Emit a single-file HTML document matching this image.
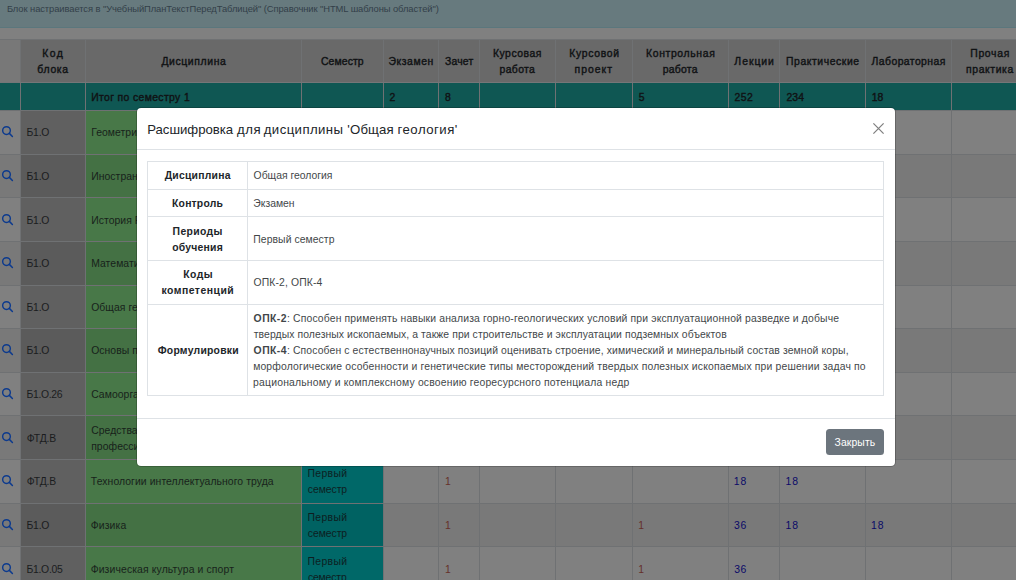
<!DOCTYPE html>
<html lang="ru"><head><meta charset="utf-8"><title>Учебный план</title>
<style>
html,body{margin:0;padding:0}
body{width:1016px;height:580px;overflow:hidden;position:relative;background:#808080;font-family:"Liberation Sans", sans-serif;}
.r{position:absolute}
.t{position:absolute;white-space:nowrap;line-height:16px;height:16px}
.t b{font-weight:bold}
svg{position:absolute;overflow:visible}
</style></head><body>
<div class="alert" role="alert">
<div class="r" style="left:0px;top:0px;width:1016px;height:27px;background:#677a7e;"></div>
<div class="r" style="left:0px;top:27px;width:1016px;height:1px;background:#5b777d;"></div>
<div class="t" style="left:6.91px;top:1px;font-size:9.4px;color:#333f49;letter-spacing:-0.082px;">Блок настраивается в "УчебныйПланТекстПередТаблицей" (Справочник "HTML шаблоны областей")</div>
</div>
<div class="plan" role="table" aria-label="Учебный план">
<div class="r" style="left:0px;top:39px;width:1016px;height:541px;background:#6f7173;"></div>
<div class="r" style="left:0px;top:40px;width:20px;height:42px;background:#787878;"></div>
<div class="r" style="left:21px;top:40px;width:64px;height:42px;background:#696969;"></div>
<div class="r" style="left:86px;top:40px;width:215px;height:42px;background:#696969;"></div>
<div class="r" style="left:302px;top:40px;width:81px;height:42px;background:#696969;"></div>
<div class="r" style="left:384px;top:40px;width:54px;height:42px;background:#696969;"></div>
<div class="r" style="left:439px;top:40px;width:40px;height:42px;background:#696969;"></div>
<div class="r" style="left:480px;top:40px;width:75px;height:42px;background:#696969;"></div>
<div class="r" style="left:556px;top:40px;width:76px;height:42px;background:#696969;"></div>
<div class="r" style="left:633px;top:40px;width:95px;height:42px;background:#696969;"></div>
<div class="r" style="left:729px;top:40px;width:50px;height:42px;background:#696969;"></div>
<div class="r" style="left:780px;top:40px;width:85px;height:42px;background:#696969;"></div>
<div class="r" style="left:866px;top:40px;width:85px;height:42px;background:#696969;"></div>
<div class="r" style="left:952px;top:40px;width:76px;height:42px;background:#696969;"></div>
<div class="r" style="left:0px;top:82px;width:1016px;height:1px;background:#757678;"></div>
<div class="r" style="left:0px;top:83px;width:20px;height:27px;background:#0f5753;"></div>
<div class="r" style="left:21px;top:83px;width:64px;height:27px;background:#0f5753;"></div>
<div class="r" style="left:86px;top:83px;width:215px;height:27px;background:#0f5753;"></div>
<div class="r" style="left:302px;top:83px;width:81px;height:27px;background:#0f5753;"></div>
<div class="r" style="left:384px;top:83px;width:54px;height:27px;background:#0f5753;"></div>
<div class="r" style="left:439px;top:83px;width:40px;height:27px;background:#0f5753;"></div>
<div class="r" style="left:480px;top:83px;width:75px;height:27px;background:#0f5753;"></div>
<div class="r" style="left:556px;top:83px;width:76px;height:27px;background:#0f5753;"></div>
<div class="r" style="left:633px;top:83px;width:95px;height:27px;background:#0f5753;"></div>
<div class="r" style="left:729px;top:83px;width:50px;height:27px;background:#0f5753;"></div>
<div class="r" style="left:780px;top:83px;width:85px;height:27px;background:#0f5753;"></div>
<div class="r" style="left:866px;top:83px;width:85px;height:27px;background:#0f5753;"></div>
<div class="r" style="left:952px;top:83px;width:76px;height:27px;background:#0f5753;"></div>
<div class="r" style="left:0px;top:111px;width:20px;height:43px;background:#808080;"></div>
<div class="r" style="left:21px;top:111px;width:64px;height:43px;background:#606060;"></div>
<div class="r" style="left:86px;top:111px;width:215px;height:43px;background:#487848;"></div>
<div class="r" style="left:302px;top:111px;width:81px;height:43px;background:#006868;"></div>
<div class="r" style="left:384px;top:111px;width:54px;height:43px;background:#808080;"></div>
<div class="r" style="left:439px;top:111px;width:40px;height:43px;background:#808080;"></div>
<div class="r" style="left:480px;top:111px;width:75px;height:43px;background:#808080;"></div>
<div class="r" style="left:556px;top:111px;width:76px;height:43px;background:#808080;"></div>
<div class="r" style="left:633px;top:111px;width:95px;height:43px;background:#808080;"></div>
<div class="r" style="left:729px;top:111px;width:50px;height:43px;background:#808080;"></div>
<div class="r" style="left:780px;top:111px;width:85px;height:43px;background:#808080;"></div>
<div class="r" style="left:866px;top:111px;width:85px;height:43px;background:#808080;"></div>
<div class="r" style="left:952px;top:111px;width:76px;height:43px;background:#808080;"></div>
<svg style="left:1px;top:125px" width="13" height="13" viewBox="0 0 13 13"><circle cx="5.5" cy="5.55" r="3.85" fill="none" stroke="#0c3a8e" stroke-width="1.45"/><path d="M8.35 8.4 L11.4 11.45" stroke="#0c3a8e" stroke-width="1.5" stroke-linecap="round"/></svg>
<div class="r" style="left:0px;top:155px;width:20px;height:42px;background:#797979;"></div>
<div class="r" style="left:21px;top:155px;width:64px;height:42px;background:#5b5b5b;"></div>
<div class="r" style="left:86px;top:155px;width:215px;height:42px;background:#447144;"></div>
<div class="r" style="left:302px;top:155px;width:81px;height:42px;background:#006262;"></div>
<div class="r" style="left:384px;top:155px;width:54px;height:42px;background:#797979;"></div>
<div class="r" style="left:439px;top:155px;width:40px;height:42px;background:#797979;"></div>
<div class="r" style="left:480px;top:155px;width:75px;height:42px;background:#797979;"></div>
<div class="r" style="left:556px;top:155px;width:76px;height:42px;background:#797979;"></div>
<div class="r" style="left:633px;top:155px;width:95px;height:42px;background:#797979;"></div>
<div class="r" style="left:729px;top:155px;width:50px;height:42px;background:#797979;"></div>
<div class="r" style="left:780px;top:155px;width:85px;height:42px;background:#797979;"></div>
<div class="r" style="left:866px;top:155px;width:85px;height:42px;background:#797979;"></div>
<div class="r" style="left:952px;top:155px;width:76px;height:42px;background:#797979;"></div>
<svg style="left:1px;top:169px" width="13" height="13" viewBox="0 0 13 13"><circle cx="5.5" cy="5.55" r="3.85" fill="none" stroke="#0c3a8e" stroke-width="1.45"/><path d="M8.35 8.4 L11.4 11.45" stroke="#0c3a8e" stroke-width="1.5" stroke-linecap="round"/></svg>
<div class="r" style="left:0px;top:198px;width:20px;height:43px;background:#808080;"></div>
<div class="r" style="left:21px;top:198px;width:64px;height:43px;background:#606060;"></div>
<div class="r" style="left:86px;top:198px;width:215px;height:43px;background:#487848;"></div>
<div class="r" style="left:302px;top:198px;width:81px;height:43px;background:#006868;"></div>
<div class="r" style="left:384px;top:198px;width:54px;height:43px;background:#808080;"></div>
<div class="r" style="left:439px;top:198px;width:40px;height:43px;background:#808080;"></div>
<div class="r" style="left:480px;top:198px;width:75px;height:43px;background:#808080;"></div>
<div class="r" style="left:556px;top:198px;width:76px;height:43px;background:#808080;"></div>
<div class="r" style="left:633px;top:198px;width:95px;height:43px;background:#808080;"></div>
<div class="r" style="left:729px;top:198px;width:50px;height:43px;background:#808080;"></div>
<div class="r" style="left:780px;top:198px;width:85px;height:43px;background:#808080;"></div>
<div class="r" style="left:866px;top:198px;width:85px;height:43px;background:#808080;"></div>
<div class="r" style="left:952px;top:198px;width:76px;height:43px;background:#808080;"></div>
<svg style="left:1px;top:213px" width="13" height="13" viewBox="0 0 13 13"><circle cx="5.5" cy="5.55" r="3.85" fill="none" stroke="#0c3a8e" stroke-width="1.45"/><path d="M8.35 8.4 L11.4 11.45" stroke="#0c3a8e" stroke-width="1.5" stroke-linecap="round"/></svg>
<div class="r" style="left:0px;top:242px;width:20px;height:43px;background:#797979;"></div>
<div class="r" style="left:21px;top:242px;width:64px;height:43px;background:#5b5b5b;"></div>
<div class="r" style="left:86px;top:242px;width:215px;height:43px;background:#447144;"></div>
<div class="r" style="left:302px;top:242px;width:81px;height:43px;background:#006262;"></div>
<div class="r" style="left:384px;top:242px;width:54px;height:43px;background:#797979;"></div>
<div class="r" style="left:439px;top:242px;width:40px;height:43px;background:#797979;"></div>
<div class="r" style="left:480px;top:242px;width:75px;height:43px;background:#797979;"></div>
<div class="r" style="left:556px;top:242px;width:76px;height:43px;background:#797979;"></div>
<div class="r" style="left:633px;top:242px;width:95px;height:43px;background:#797979;"></div>
<div class="r" style="left:729px;top:242px;width:50px;height:43px;background:#797979;"></div>
<div class="r" style="left:780px;top:242px;width:85px;height:43px;background:#797979;"></div>
<div class="r" style="left:866px;top:242px;width:85px;height:43px;background:#797979;"></div>
<div class="r" style="left:952px;top:242px;width:76px;height:43px;background:#797979;"></div>
<svg style="left:1px;top:256px" width="13" height="13" viewBox="0 0 13 13"><circle cx="5.5" cy="5.55" r="3.85" fill="none" stroke="#0c3a8e" stroke-width="1.45"/><path d="M8.35 8.4 L11.4 11.45" stroke="#0c3a8e" stroke-width="1.5" stroke-linecap="round"/></svg>
<div class="r" style="left:0px;top:286px;width:20px;height:42px;background:#808080;"></div>
<div class="r" style="left:21px;top:286px;width:64px;height:42px;background:#606060;"></div>
<div class="r" style="left:86px;top:286px;width:215px;height:42px;background:#487848;"></div>
<div class="r" style="left:302px;top:286px;width:81px;height:42px;background:#006868;"></div>
<div class="r" style="left:384px;top:286px;width:54px;height:42px;background:#808080;"></div>
<div class="r" style="left:439px;top:286px;width:40px;height:42px;background:#808080;"></div>
<div class="r" style="left:480px;top:286px;width:75px;height:42px;background:#808080;"></div>
<div class="r" style="left:556px;top:286px;width:76px;height:42px;background:#808080;"></div>
<div class="r" style="left:633px;top:286px;width:95px;height:42px;background:#808080;"></div>
<div class="r" style="left:729px;top:286px;width:50px;height:42px;background:#808080;"></div>
<div class="r" style="left:780px;top:286px;width:85px;height:42px;background:#808080;"></div>
<div class="r" style="left:866px;top:286px;width:85px;height:42px;background:#808080;"></div>
<div class="r" style="left:952px;top:286px;width:76px;height:42px;background:#808080;"></div>
<svg style="left:1px;top:300px" width="13" height="13" viewBox="0 0 13 13"><circle cx="5.5" cy="5.55" r="3.85" fill="none" stroke="#0c3a8e" stroke-width="1.45"/><path d="M8.35 8.4 L11.4 11.45" stroke="#0c3a8e" stroke-width="1.5" stroke-linecap="round"/></svg>
<div class="r" style="left:0px;top:329px;width:20px;height:43px;background:#797979;"></div>
<div class="r" style="left:21px;top:329px;width:64px;height:43px;background:#5b5b5b;"></div>
<div class="r" style="left:86px;top:329px;width:215px;height:43px;background:#447144;"></div>
<div class="r" style="left:302px;top:329px;width:81px;height:43px;background:#006262;"></div>
<div class="r" style="left:384px;top:329px;width:54px;height:43px;background:#797979;"></div>
<div class="r" style="left:439px;top:329px;width:40px;height:43px;background:#797979;"></div>
<div class="r" style="left:480px;top:329px;width:75px;height:43px;background:#797979;"></div>
<div class="r" style="left:556px;top:329px;width:76px;height:43px;background:#797979;"></div>
<div class="r" style="left:633px;top:329px;width:95px;height:43px;background:#797979;"></div>
<div class="r" style="left:729px;top:329px;width:50px;height:43px;background:#797979;"></div>
<div class="r" style="left:780px;top:329px;width:85px;height:43px;background:#797979;"></div>
<div class="r" style="left:866px;top:329px;width:85px;height:43px;background:#797979;"></div>
<div class="r" style="left:952px;top:329px;width:76px;height:43px;background:#797979;"></div>
<svg style="left:1px;top:343px" width="13" height="13" viewBox="0 0 13 13"><circle cx="5.5" cy="5.55" r="3.85" fill="none" stroke="#0c3a8e" stroke-width="1.45"/><path d="M8.35 8.4 L11.4 11.45" stroke="#0c3a8e" stroke-width="1.5" stroke-linecap="round"/></svg>
<div class="r" style="left:0px;top:373px;width:20px;height:42px;background:#808080;"></div>
<div class="r" style="left:21px;top:373px;width:64px;height:42px;background:#606060;"></div>
<div class="r" style="left:86px;top:373px;width:215px;height:42px;background:#487848;"></div>
<div class="r" style="left:302px;top:373px;width:81px;height:42px;background:#006868;"></div>
<div class="r" style="left:384px;top:373px;width:54px;height:42px;background:#808080;"></div>
<div class="r" style="left:439px;top:373px;width:40px;height:42px;background:#808080;"></div>
<div class="r" style="left:480px;top:373px;width:75px;height:42px;background:#808080;"></div>
<div class="r" style="left:556px;top:373px;width:76px;height:42px;background:#808080;"></div>
<div class="r" style="left:633px;top:373px;width:95px;height:42px;background:#808080;"></div>
<div class="r" style="left:729px;top:373px;width:50px;height:42px;background:#808080;"></div>
<div class="r" style="left:780px;top:373px;width:85px;height:42px;background:#808080;"></div>
<div class="r" style="left:866px;top:373px;width:85px;height:42px;background:#808080;"></div>
<div class="r" style="left:952px;top:373px;width:76px;height:42px;background:#808080;"></div>
<svg style="left:1px;top:387px" width="13" height="13" viewBox="0 0 13 13"><circle cx="5.5" cy="5.55" r="3.85" fill="none" stroke="#0c3a8e" stroke-width="1.45"/><path d="M8.35 8.4 L11.4 11.45" stroke="#0c3a8e" stroke-width="1.5" stroke-linecap="round"/></svg>
<div class="r" style="left:0px;top:416px;width:20px;height:43px;background:#797979;"></div>
<div class="r" style="left:21px;top:416px;width:64px;height:43px;background:#5b5b5b;"></div>
<div class="r" style="left:86px;top:416px;width:215px;height:43px;background:#447144;"></div>
<div class="r" style="left:302px;top:416px;width:81px;height:43px;background:#006262;"></div>
<div class="r" style="left:384px;top:416px;width:54px;height:43px;background:#797979;"></div>
<div class="r" style="left:439px;top:416px;width:40px;height:43px;background:#797979;"></div>
<div class="r" style="left:480px;top:416px;width:75px;height:43px;background:#797979;"></div>
<div class="r" style="left:556px;top:416px;width:76px;height:43px;background:#797979;"></div>
<div class="r" style="left:633px;top:416px;width:95px;height:43px;background:#797979;"></div>
<div class="r" style="left:729px;top:416px;width:50px;height:43px;background:#797979;"></div>
<div class="r" style="left:780px;top:416px;width:85px;height:43px;background:#797979;"></div>
<div class="r" style="left:866px;top:416px;width:85px;height:43px;background:#797979;"></div>
<div class="r" style="left:952px;top:416px;width:76px;height:43px;background:#797979;"></div>
<svg style="left:1px;top:431px" width="13" height="13" viewBox="0 0 13 13"><circle cx="5.5" cy="5.55" r="3.85" fill="none" stroke="#0c3a8e" stroke-width="1.45"/><path d="M8.35 8.4 L11.4 11.45" stroke="#0c3a8e" stroke-width="1.5" stroke-linecap="round"/></svg>
<div class="r" style="left:0px;top:460px;width:20px;height:43px;background:#808080;"></div>
<div class="r" style="left:21px;top:460px;width:64px;height:43px;background:#606060;"></div>
<div class="r" style="left:86px;top:460px;width:215px;height:43px;background:#487848;"></div>
<div class="r" style="left:302px;top:460px;width:81px;height:43px;background:#006868;"></div>
<div class="r" style="left:384px;top:460px;width:54px;height:43px;background:#808080;"></div>
<div class="r" style="left:439px;top:460px;width:40px;height:43px;background:#808080;"></div>
<div class="r" style="left:480px;top:460px;width:75px;height:43px;background:#808080;"></div>
<div class="r" style="left:556px;top:460px;width:76px;height:43px;background:#808080;"></div>
<div class="r" style="left:633px;top:460px;width:95px;height:43px;background:#808080;"></div>
<div class="r" style="left:729px;top:460px;width:50px;height:43px;background:#808080;"></div>
<div class="r" style="left:780px;top:460px;width:85px;height:43px;background:#808080;"></div>
<div class="r" style="left:866px;top:460px;width:85px;height:43px;background:#808080;"></div>
<div class="r" style="left:952px;top:460px;width:76px;height:43px;background:#808080;"></div>
<svg style="left:1px;top:474px" width="13" height="13" viewBox="0 0 13 13"><circle cx="5.5" cy="5.55" r="3.85" fill="none" stroke="#0c3a8e" stroke-width="1.45"/><path d="M8.35 8.4 L11.4 11.45" stroke="#0c3a8e" stroke-width="1.5" stroke-linecap="round"/></svg>
<div class="r" style="left:0px;top:504px;width:20px;height:42px;background:#797979;"></div>
<div class="r" style="left:21px;top:504px;width:64px;height:42px;background:#5b5b5b;"></div>
<div class="r" style="left:86px;top:504px;width:215px;height:42px;background:#447144;"></div>
<div class="r" style="left:302px;top:504px;width:81px;height:42px;background:#006262;"></div>
<div class="r" style="left:384px;top:504px;width:54px;height:42px;background:#797979;"></div>
<div class="r" style="left:439px;top:504px;width:40px;height:42px;background:#797979;"></div>
<div class="r" style="left:480px;top:504px;width:75px;height:42px;background:#797979;"></div>
<div class="r" style="left:556px;top:504px;width:76px;height:42px;background:#797979;"></div>
<div class="r" style="left:633px;top:504px;width:95px;height:42px;background:#797979;"></div>
<div class="r" style="left:729px;top:504px;width:50px;height:42px;background:#797979;"></div>
<div class="r" style="left:780px;top:504px;width:85px;height:42px;background:#797979;"></div>
<div class="r" style="left:866px;top:504px;width:85px;height:42px;background:#797979;"></div>
<div class="r" style="left:952px;top:504px;width:76px;height:42px;background:#797979;"></div>
<svg style="left:1px;top:518px" width="13" height="13" viewBox="0 0 13 13"><circle cx="5.5" cy="5.55" r="3.85" fill="none" stroke="#0c3a8e" stroke-width="1.45"/><path d="M8.35 8.4 L11.4 11.45" stroke="#0c3a8e" stroke-width="1.5" stroke-linecap="round"/></svg>
<div class="r" style="left:0px;top:547px;width:20px;height:43px;background:#808080;"></div>
<div class="r" style="left:21px;top:547px;width:64px;height:43px;background:#606060;"></div>
<div class="r" style="left:86px;top:547px;width:215px;height:43px;background:#487848;"></div>
<div class="r" style="left:302px;top:547px;width:81px;height:43px;background:#006868;"></div>
<div class="r" style="left:384px;top:547px;width:54px;height:43px;background:#808080;"></div>
<div class="r" style="left:439px;top:547px;width:40px;height:43px;background:#808080;"></div>
<div class="r" style="left:480px;top:547px;width:75px;height:43px;background:#808080;"></div>
<div class="r" style="left:556px;top:547px;width:76px;height:43px;background:#808080;"></div>
<div class="r" style="left:633px;top:547px;width:95px;height:43px;background:#808080;"></div>
<div class="r" style="left:729px;top:547px;width:50px;height:43px;background:#808080;"></div>
<div class="r" style="left:780px;top:547px;width:85px;height:43px;background:#808080;"></div>
<div class="r" style="left:866px;top:547px;width:85px;height:43px;background:#808080;"></div>
<div class="r" style="left:952px;top:547px;width:76px;height:43px;background:#808080;"></div>
<svg style="left:1px;top:562px" width="13" height="13" viewBox="0 0 13 13"><circle cx="5.5" cy="5.55" r="3.85" fill="none" stroke="#0c3a8e" stroke-width="1.45"/><path d="M8.35 8.4 L11.4 11.45" stroke="#0c3a8e" stroke-width="1.5" stroke-linecap="round"/></svg>
<div class="t" style="left:42.23px;top:46px;font-size:10.4px;color:#101214;letter-spacing:1.433px;-webkit-text-stroke:0.4px #101214;">Код</div>
<div class="t" style="left:37.30px;top:62px;font-size:10.4px;color:#101214;letter-spacing:0.711px;-webkit-text-stroke:0.4px #101214;">блока</div>
<div class="t" style="left:161.42px;top:54px;font-size:10.4px;color:#101214;letter-spacing:0.619px;-webkit-text-stroke:0.4px #101214;">Дисциплина</div>
<div class="t" style="left:320.94px;top:54px;font-size:10.4px;color:#101214;letter-spacing:0.127px;-webkit-text-stroke:0.4px #101214;">Семестр</div>
<div class="t" style="left:388.39px;top:54px;font-size:10.4px;color:#101214;letter-spacing:0.588px;-webkit-text-stroke:0.4px #101214;">Экзамен</div>
<div class="t" style="left:444.94px;top:54px;font-size:10.4px;color:#101214;letter-spacing:0.219px;-webkit-text-stroke:0.4px #101214;">Зачет</div>
<div class="t" style="left:492.99px;top:46px;font-size:10.4px;color:#101214;letter-spacing:0.503px;-webkit-text-stroke:0.4px #101214;">Курсовая</div>
<div class="t" style="left:499.56px;top:62px;font-size:10.4px;color:#101214;letter-spacing:0.371px;-webkit-text-stroke:0.4px #101214;">работа</div>
<div class="t" style="left:569.27px;top:46px;font-size:10.4px;color:#101214;letter-spacing:0.679px;-webkit-text-stroke:0.4px #101214;">Курсовой</div>
<div class="t" style="left:574.61px;top:62px;font-size:10.4px;color:#101214;letter-spacing:0.980px;-webkit-text-stroke:0.4px #101214;">проект</div>
<div class="t" style="left:646.06px;top:46px;font-size:10.4px;color:#101214;letter-spacing:0.643px;-webkit-text-stroke:0.4px #101214;">Контрольная</div>
<div class="t" style="left:662.64px;top:62px;font-size:10.4px;color:#101214;letter-spacing:0.288px;-webkit-text-stroke:0.4px #101214;">работа</div>
<div class="t" style="left:734.36px;top:54px;font-size:10.4px;color:#101214;letter-spacing:0.964px;-webkit-text-stroke:0.4px #101214;">Лекции</div>
<div class="t" style="left:785.99px;top:54px;font-size:10.4px;color:#101214;letter-spacing:0.574px;-webkit-text-stroke:0.4px #101214;">Практические</div>
<div class="t" style="left:871.60px;top:54px;font-size:10.4px;color:#101214;letter-spacing:0.429px;-webkit-text-stroke:0.4px #101214;">Лабораторная</div>
<div class="t" style="left:970.23px;top:46px;font-size:10.4px;color:#101214;letter-spacing:0.698px;-webkit-text-stroke:0.4px #101214;">Прочая</div>
<div class="t" style="left:966.00px;top:62px;font-size:10.4px;color:#101214;letter-spacing:0.619px;-webkit-text-stroke:0.4px #101214;">практика</div>
<div class="t" style="left:91.14px;top:90px;font-size:10.4px;color:#101214;letter-spacing:0.371px;-webkit-text-stroke:0.4px #101214;">Итог по семестру 1</div>
<div class="t" style="left:389.40px;top:90px;font-size:10.4px;color:#101214;letter-spacing:0.443px;-webkit-text-stroke:0.4px #101214;">2</div>
<div class="t" style="left:445.00px;top:90px;font-size:10.4px;color:#101214;letter-spacing:0.443px;-webkit-text-stroke:0.4px #101214;">8</div>
<div class="t" style="left:638.70px;top:90px;font-size:10.4px;color:#101214;letter-spacing:0.443px;-webkit-text-stroke:0.4px #101214;">5</div>
<div class="t" style="left:734.59px;top:90px;font-size:10.4px;color:#101214;letter-spacing:0.420px;-webkit-text-stroke:0.4px #101214;">252</div>
<div class="t" style="left:786.44px;top:90px;font-size:10.4px;color:#101214;letter-spacing:0.150px;-webkit-text-stroke:0.4px #101214;">234</div>
<div class="t" style="left:871.72px;top:90px;font-size:10.4px;color:#101214;letter-spacing:-0.013px;-webkit-text-stroke:0.4px #101214;">18</div>
<div class="t" style="left:26.49px;top:125px;font-size:10.4px;color:#101214;letter-spacing:-0.201px;opacity:0.85;">Б1.О</div>
<div class="t" style="left:91.20px;top:125px;font-size:10.4px;color:#101214;letter-spacing:0.057px;opacity:0.85;">Геометрия недр</div>
<div class="t" style="left:308.20px;top:117px;font-size:10.4px;color:#101214;letter-spacing:0.054px;opacity:0.85;">Первый</div>
<div class="t" style="left:307.90px;top:133px;font-size:10.4px;color:#101214;letter-spacing:-0.140px;opacity:0.85;">семестр</div>
<div class="t" style="left:26.49px;top:169px;font-size:10.4px;color:#101214;letter-spacing:-0.202px;opacity:0.85;">Б1.О</div>
<div class="t" style="left:91.20px;top:169px;font-size:10.4px;color:#101214;letter-spacing:0.057px;opacity:0.85;">Иностранный язык</div>
<div class="t" style="left:308.20px;top:161px;font-size:10.4px;color:#101214;letter-spacing:0.054px;opacity:0.85;">Первый</div>
<div class="t" style="left:307.90px;top:177px;font-size:10.4px;color:#101214;letter-spacing:-0.140px;opacity:0.85;">семестр</div>
<div class="t" style="left:26.49px;top:213px;font-size:10.4px;color:#101214;letter-spacing:-0.201px;opacity:0.85;">Б1.О</div>
<div class="t" style="left:91.20px;top:213px;font-size:10.4px;color:#101214;letter-spacing:0.057px;opacity:0.85;">История России</div>
<div class="t" style="left:308.20px;top:205px;font-size:10.4px;color:#101214;letter-spacing:0.054px;opacity:0.85;">Первый</div>
<div class="t" style="left:307.90px;top:221px;font-size:10.4px;color:#101214;letter-spacing:-0.140px;opacity:0.85;">семестр</div>
<div class="t" style="left:26.49px;top:256px;font-size:10.4px;color:#101214;letter-spacing:-0.202px;opacity:0.85;">Б1.О</div>
<div class="t" style="left:91.20px;top:256px;font-size:10.4px;color:#101214;letter-spacing:0.057px;opacity:0.85;">Математика</div>
<div class="t" style="left:308.20px;top:248px;font-size:10.4px;color:#101214;letter-spacing:0.054px;opacity:0.85;">Первый</div>
<div class="t" style="left:307.90px;top:264px;font-size:10.4px;color:#101214;letter-spacing:-0.140px;opacity:0.85;">семестр</div>
<div class="t" style="left:26.49px;top:300px;font-size:10.4px;color:#101214;letter-spacing:-0.201px;opacity:0.85;">Б1.О</div>
<div class="t" style="left:91.20px;top:300px;font-size:10.4px;color:#101214;letter-spacing:0.057px;opacity:0.85;">Общая геология</div>
<div class="t" style="left:308.20px;top:292px;font-size:10.4px;color:#101214;letter-spacing:0.054px;opacity:0.85;">Первый</div>
<div class="t" style="left:307.90px;top:308px;font-size:10.4px;color:#101214;letter-spacing:-0.140px;opacity:0.85;">семестр</div>
<div class="t" style="left:26.49px;top:343px;font-size:10.4px;color:#101214;letter-spacing:-0.202px;opacity:0.85;">Б1.О</div>
<div class="t" style="left:91.20px;top:343px;font-size:10.4px;color:#101214;letter-spacing:0.057px;opacity:0.85;">Основы проектной деятельности</div>
<div class="t" style="left:308.20px;top:335px;font-size:10.4px;color:#101214;letter-spacing:0.054px;opacity:0.85;">Первый</div>
<div class="t" style="left:307.90px;top:351px;font-size:10.4px;color:#101214;letter-spacing:-0.140px;opacity:0.85;">семестр</div>
<div class="t" style="left:26.49px;top:387px;font-size:10.4px;color:#101214;letter-spacing:-0.327px;opacity:0.85;">Б1.О.26</div>
<div class="t" style="left:91.20px;top:387px;font-size:10.4px;color:#101214;letter-spacing:0.057px;opacity:0.85;">Самоорганизация и саморазвитие</div>
<div class="t" style="left:308.20px;top:379px;font-size:10.4px;color:#101214;letter-spacing:0.054px;opacity:0.85;">Первый</div>
<div class="t" style="left:307.90px;top:395px;font-size:10.4px;color:#101214;letter-spacing:-0.140px;opacity:0.85;">семестр</div>
<div class="t" style="left:26.67px;top:431px;font-size:10.4px;color:#101214;letter-spacing:-0.147px;opacity:0.85;">ФТД.В</div>
<div class="t" style="left:91.20px;top:423px;font-size:10.4px;color:#101214;letter-spacing:0.057px;opacity:0.85;">Средства коммуникации в учебной и</div>
<div class="t" style="left:91.20px;top:439px;font-size:10.4px;color:#101214;letter-spacing:0.057px;opacity:0.85;">профессиональной деятельности</div>
<div class="t" style="left:308.20px;top:423px;font-size:10.4px;color:#101214;letter-spacing:0.054px;opacity:0.85;">Первый</div>
<div class="t" style="left:307.90px;top:439px;font-size:10.4px;color:#101214;letter-spacing:-0.140px;opacity:0.85;">семестр</div>
<div class="t" style="left:26.66px;top:474px;font-size:10.4px;color:#101214;letter-spacing:-0.145px;opacity:0.85;">ФТД.В</div>
<div class="t" style="left:90.85px;top:474px;font-size:10.4px;color:#101214;letter-spacing:0.074px;opacity:0.85;">Технологии интеллектуального труда</div>
<div class="t" style="left:307.59px;top:466px;font-size:10.4px;color:#101214;letter-spacing:0.318px;opacity:0.85;">Первый</div>
<div class="t" style="left:307.74px;top:482px;font-size:10.4px;color:#101214;letter-spacing:-0.039px;opacity:0.85;">семестр</div>
<div class="t" style="left:445.00px;top:474px;font-size:10.4px;color:#65302a;letter-spacing:0.057px;">1</div>
<div class="t" style="left:733.84px;top:474px;font-size:10.4px;color:#0a0a68;letter-spacing:0.857px;">18</div>
<div class="t" style="left:785.62px;top:474px;font-size:10.4px;color:#0a0a68;letter-spacing:0.833px;">18</div>
<div class="t" style="left:26.49px;top:518px;font-size:10.4px;color:#101214;letter-spacing:-0.202px;opacity:0.85;">Б1.О</div>
<div class="t" style="left:90.67px;top:518px;font-size:10.4px;color:#101214;letter-spacing:0.145px;opacity:0.85;">Физика</div>
<div class="t" style="left:307.58px;top:510px;font-size:10.4px;color:#101214;letter-spacing:0.319px;opacity:0.85;">Первый</div>
<div class="t" style="left:307.74px;top:526px;font-size:10.4px;color:#101214;letter-spacing:-0.039px;opacity:0.85;">семестр</div>
<div class="t" style="left:445.00px;top:518px;font-size:10.4px;color:#65302a;letter-spacing:0.057px;">1</div>
<div class="t" style="left:638.30px;top:518px;font-size:10.4px;color:#65302a;letter-spacing:0.057px;">1</div>
<div class="t" style="left:734.12px;top:518px;font-size:10.4px;color:#0a0a68;letter-spacing:0.623px;">36</div>
<div class="t" style="left:785.61px;top:518px;font-size:10.4px;color:#0a0a68;letter-spacing:0.825px;">18</div>
<div class="t" style="left:871.12px;top:518px;font-size:10.4px;color:#0a0a68;letter-spacing:0.967px;">18</div>
<div class="t" style="left:26.49px;top:562px;font-size:10.4px;color:#101214;letter-spacing:-0.289px;opacity:0.85;">Б1.О.05</div>
<div class="t" style="left:90.68px;top:562px;font-size:10.4px;color:#101214;letter-spacing:0.124px;opacity:0.85;">Физическая культура и спорт</div>
<div class="t" style="left:307.59px;top:554px;font-size:10.4px;color:#101214;letter-spacing:0.318px;opacity:0.85;">Первый</div>
<div class="t" style="left:307.90px;top:570px;font-size:10.4px;color:#101214;letter-spacing:-0.140px;opacity:0.85;">семестр</div>
<div class="t" style="left:445.00px;top:562px;font-size:10.4px;color:#65302a;letter-spacing:0.057px;">1</div>
<div class="t" style="left:638.30px;top:562px;font-size:10.4px;color:#65302a;letter-spacing:0.057px;">1</div>
<div class="t" style="left:734.13px;top:562px;font-size:10.4px;color:#0a0a68;letter-spacing:0.624px;">36</div>
</div>
<div class="modal" role="dialog" aria-modal="true">
<div class="r" style="left:136px;top:107px;width:758px;height:358px;background:#fff;background-clip:padding-box;border:1px solid rgba(0,0,0,.2);border-radius:5px;z-index:2"></div>
<div class="r" style="left:137px;top:149px;width:758px;height:1px;background:#dee2e6;z-index:2;"></div>
<div class="r" style="left:137px;top:418px;width:758px;height:1px;background:#dee2e6;z-index:2;"></div>
<div class="r" style="left:147px;top:161px;width:737px;height:1px;background:#dee2e6;z-index:2;"></div>
<div class="r" style="left:147px;top:189px;width:737px;height:1px;background:#dee2e6;z-index:2;"></div>
<div class="r" style="left:147px;top:216px;width:737px;height:1px;background:#dee2e6;z-index:2;"></div>
<div class="r" style="left:147px;top:260px;width:737px;height:1px;background:#dee2e6;z-index:2;"></div>
<div class="r" style="left:147px;top:304px;width:737px;height:1px;background:#dee2e6;z-index:2;"></div>
<div class="r" style="left:147px;top:395px;width:737px;height:1px;background:#dee2e6;z-index:2;"></div>
<div class="r" style="left:147px;top:161px;width:1px;height:235px;background:#dee2e6;z-index:2;"></div>
<div class="r" style="left:247px;top:161px;width:1px;height:235px;background:#dee2e6;z-index:2;"></div>
<div class="r" style="left:883px;top:161px;width:1px;height:235px;background:#dee2e6;z-index:2;"></div>
<svg style="left:873px;top:123px;z-index:3" width="11" height="11" viewBox="0 0 11 11"><path d="M0.4 0.4 L10.6 10.6 M10.6 0.4 L0.4 10.6" stroke="#7f7f7f" stroke-width="1.25" fill="none"/></svg>
<div class="r" style="left:826px;top:429px;width:58px;height:26px;background:#6c757d;border-radius:3.5px;z-index:2"></div>
<div class="t" style="left:147.21px;top:122px;font-size:13.2px;color:#212529;letter-spacing:-0.021px;z-index:3;">Расшифровка</div>
<div class="t" style="left:236.91px;top:122px;font-size:13.2px;color:#212529;letter-spacing:0.660px;z-index:3;">для</div>
<div class="t" style="left:263.74px;top:122px;font-size:13.2px;color:#212529;letter-spacing:0.419px;z-index:3;">дисциплины</div>
<div class="t" style="left:347.34px;top:122px;font-size:13.2px;color:#212529;letter-spacing:0.140px;z-index:3;">'Общая</div>
<div class="t" style="left:397.56px;top:122px;font-size:13.2px;color:#212529;letter-spacing:0.480px;z-index:3;">геология'</div>
<div class="t" style="left:164.73px;top:168px;font-size:10.4px;color:#212529;letter-spacing:0.226px;font-weight:bold;z-index:3;">Дисциплина</div>
<div class="t" style="left:253.59px;top:168px;font-size:10.4px;color:#212529;letter-spacing:-0.011px;opacity:0.85;z-index:3;">Общая геология</div>
<div class="t" style="left:172.08px;top:196px;font-size:10.4px;color:#212529;letter-spacing:0.182px;font-weight:bold;z-index:3;">Контроль</div>
<div class="t" style="left:253.30px;top:196px;font-size:10.4px;color:#212529;letter-spacing:-0.004px;opacity:0.85;z-index:3;">Экзамен</div>
<div class="t" style="left:172.56px;top:224px;font-size:10.4px;color:#212529;letter-spacing:0.364px;font-weight:bold;z-index:3;">Периоды</div>
<div class="t" style="left:172.27px;top:240px;font-size:10.4px;color:#212529;letter-spacing:0.214px;font-weight:bold;z-index:3;">обучения</div>
<div class="t" style="left:253.32px;top:232px;font-size:10.4px;color:#212529;letter-spacing:0.063px;opacity:0.85;z-index:3;">Первый семестр</div>
<div class="t" style="left:183.28px;top:267px;font-size:10.4px;color:#212529;letter-spacing:0.422px;font-weight:bold;z-index:3;">Коды</div>
<div class="t" style="left:161.45px;top:283px;font-size:10.4px;color:#212529;letter-spacing:0.505px;font-weight:bold;z-index:3;">компетенций</div>
<div class="t" style="left:253.47px;top:275px;font-size:10.4px;color:#212529;letter-spacing:0.120px;opacity:0.85;z-index:3;">ОПК-2, ОПК-4</div>
<div class="t" style="left:157.69px;top:343px;font-size:10.4px;color:#212529;letter-spacing:0.247px;font-weight:bold;z-index:3;">Формулировки</div>
<div class="t" style="left:253.60px;top:311px;font-size:10.4px;color:#212529;letter-spacing:0.142px;opacity:0.85;z-index:3;"><b style="letter-spacing:0.45px">ОПК-2</b>: Способен применять навыки анализа горно-геологических условий при эксплуатационной разведке и добыче</div>
<div class="t" style="left:253.78px;top:327px;font-size:10.4px;color:#212529;letter-spacing:0.082px;opacity:0.85;z-index:3;">твердых полезных ископаемых, а также при строительстве и эксплуатации подземных объектов</div>
<div class="t" style="left:253.60px;top:343px;font-size:10.4px;color:#212529;letter-spacing:0.115px;opacity:0.85;z-index:3;"><b style="letter-spacing:0.45px">ОПК-4</b>: Способен с естественнонаучных позиций оценивать строение, химический и минеральный состав земной коры,</div>
<div class="t" style="left:253.14px;top:359px;font-size:10.4px;color:#212529;letter-spacing:0.151px;opacity:0.85;z-index:3;">морфологические особенности и генетические типы месторождений твердых полезных ископаемых при решении задач по</div>
<div class="t" style="left:253.11px;top:375px;font-size:10.4px;color:#212529;letter-spacing:0.185px;opacity:0.85;z-index:3;">рациональному и комплексному освоению георесурсного потенциала недр</div>
<div class="t" style="left:834.49px;top:435px;font-size:10.4px;color:#ffffff;letter-spacing:0.117px;z-index:3;">Закрыть</div>
</div>
</body></html>
